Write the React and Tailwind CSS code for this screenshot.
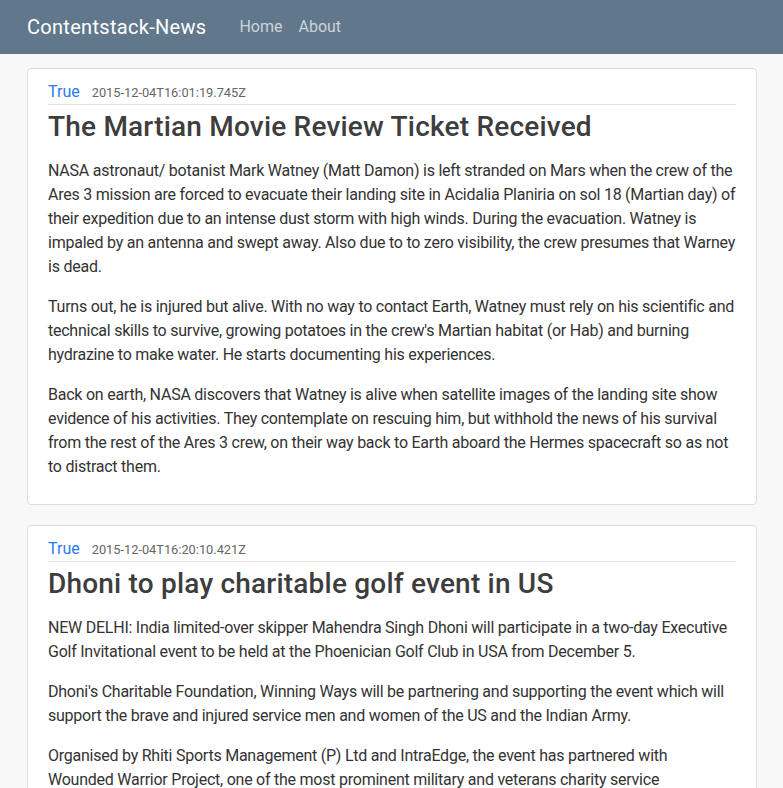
import React from "react";

const posts = [
  {
    flag: "True",
    date: "2015-12-04T16:01:19.745Z",
    title: "The Martian Movie Review Ticket Received",
    body: [
      "NASA astronaut/ botanist Mark Watney (Matt Damon) is left stranded on Mars when the crew of the Ares 3 mission are forced to evacuate their landing site in Acidalia Planiria on sol 18 (Martian day) of their expedition due to an intense dust storm with high winds. During the evacuation. Watney is impaled by an antenna and swept away. Also due to to zero visibility, the crew presumes that Warney is dead.",
      "Turns out, he is injured but alive. With no way to contact Earth, Watney must rely on his scientific and technical skills to survive, growing potatoes in the crew's Martian habitat (or Hab) and burning hydrazine to make water. He starts documenting his experiences.",
      "Back on earth, NASA discovers that Watney is alive when satellite images of the landing site show evidence of his activities. They contemplate on rescuing him, but withhold the news of his survival from the rest of the Ares 3 crew, on their way back to Earth aboard the Hermes spacecraft so as not to distract them.",
    ],
  },
  {
    flag: "True",
    date: "2015-12-04T16:20:10.421Z",
    title: "Dhoni to play charitable golf event in US",
    body: [
      "NEW DELHI: India limited-over skipper Mahendra Singh Dhoni will participate in a two-day Executive Golf Invitational event to be held at the Phoenician Golf Club in USA from December 5.",
      "Dhoni's Charitable Foundation, Winning Ways will be partnering and supporting the event which will support the brave and injured service men and women of the US and the Indian Army.",
      "Organised by Rhiti Sports Management (P) Ltd and IntraEdge, the event has partnered with Wounded Warrior Project, one of the most prominent military and veterans charity service organisations in the US, to raise funds for the cause.",
    ],
  },
];

const NewsCard = ({ post }) => (
  <article className="bg-white border border-[#dcdcdc] rounded-[4px] px-5 pt-[11px] pb-[9px]">
    <div className="flex items-baseline gap-[12px] border-b border-[#e2e2e2] h-[25px]">
      <a href="#" className="text-[#2a7af3] text-base leading-6">{post.flag}</a>
      <span className="text-[#666] text-[12.8px]">{post.date}</span>
    </div>
    <h2 className="text-[#3d3d3d] text-[28px] leading-[34px] font-medium tracking-[0.2px] mt-[5px] mb-[15px]">{post.title}</h2>
    {post.body.map((p, i) => (
      <p key={i} className="text-[#333] text-base leading-6 tracking-[-0.24px] mb-4">{p}</p>
    ))}
  </article>
);

export default function App() {
  return (
    <div className="min-h-screen bg-[#f8f8f8] font-['Roboto',sans-serif]">
      <nav className="bg-[#61778c] h-[54px] flex items-center px-[27px]">
        <span className="text-white text-[20px] tracking-[0.3px] mr-[33px]">Contentstack-News</span>
        <a href="#" className="text-[#ccd3da] text-base mr-[16px]">Home</a>
        <a href="#" className="text-[#ccd3da] text-base">About</a>
      </nav>
      <main className="px-[27px] pt-[14px] pr-[26px] flex flex-col gap-[20px]">
        {posts.map((post, i) => (
          <NewsCard key={i} post={post} />
        ))}
      </main>
    </div>
  );
}
